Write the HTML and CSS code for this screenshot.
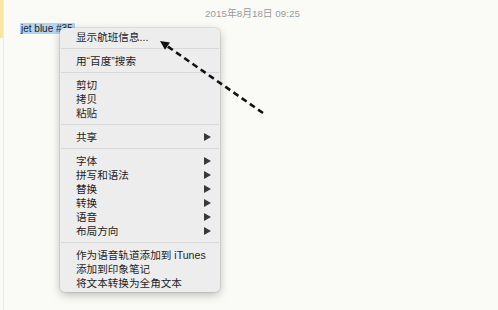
FILE: index.html
```html
<!DOCTYPE html>
<html lang="zh-CN">
<head>
<meta charset="utf-8">
<title>Menu</title>
<link rel="stylesheet" href="styles.css">
</head>
<body>
<div class="page">
  <div class="gutter"><div class="mark"></div></div>
  <div class="rule"></div>
  <div class="content">
    <div class="date">2015年8月18日 09:25</div>
    <div class="text"><span class="sel">jet blue #35</span></div>
  </div>
</div>

<div class="menu">
  <div class="item">显示航班信息...</div>
  <div class="sep"></div>
  <div class="item">用“百度”搜索</div>
  <div class="sep"></div>
  <div class="item">剪切</div>
  <div class="item">拷贝</div>
  <div class="item">粘贴</div>
  <div class="sep"></div>
  <div class="item">共享<span class="sub"></span></div>
  <div class="sep"></div>
  <div class="item">字体<span class="sub"></span></div>
  <div class="item">拼写和语法<span class="sub"></span></div>
  <div class="item">替换<span class="sub"></span></div>
  <div class="item">转换<span class="sub"></span></div>
  <div class="item">语音<span class="sub"></span></div>
  <div class="item">布局方向<span class="sub"></span></div>
  <div class="sep"></div>
  <div class="item">作为语音轨道添加到 iTunes</div>
  <div class="item">添加到印象笔记</div>
  <div class="item">将文本转换为全角文本</div>
</div>

<svg class="arrow" width="498" height="310" viewBox="0 0 498 310">
  <line x1="263" y1="113" x2="167" y2="46" stroke="#111" stroke-width="2.6" stroke-dasharray="6 4"/>
  <polygon points="160,41 170,42.6 165,49.8" fill="#111"/>
</svg>
</body>
</html>
```
FILE: styles.css
```css
html, body {
  margin: 0;
  padding: 0;
}
body {
  width: 498px;
  height: 310px;
  overflow: hidden;
  position: relative;
  background: #fafaf7;
  font-family: "Liberation Sans", "Noto Sans CJK SC", sans-serif;
}
.page {
  display: flex;
  height: 310px;
}
.gutter {
  width: 3px;
  display: flex;
  flex-direction: column;
}
.mark {
  height: 38px;
  background: #f6e6a2;
}
.rule {
  width: 1px;
  background: #ebebe8;
}
.content {
  flex: 1;
  padding-top: 8px;
}
.date {
  text-align: center;
  font-size: 9.8px;
  line-height: 12px;
  color: #9b9b9b;
  padding-left: 3px;
}
.text {
  margin-top: 3px;
  padding-left: 16px;
  font-size: 10px;
  line-height: 11px;
  color: #1c1c1c;
}
.sel {
  display: inline-block;
  background: #b5d4f4;
  padding: 0 2px 0 1px;
  height: 11px;
}
.menu {
  position: absolute;
  left: 60px;
  top: 28px;
  width: 160px;
  padding: 2px 0;
  background: #ededed;
  border-radius: 5px;
  box-shadow: 0 0 0 1px rgba(0, 0, 0, 0.07), 0 3px 10px rgba(0, 0, 0, 0.25);
}
.item {
  display: flex;
  justify-content: space-between;
  align-items: center;
  height: 14px;
  line-height: 14px;
  padding: 0 9px 0 16px;
  font-size: 10.6px;
  color: #1e1e1e;
  white-space: nowrap;
}
.sub {
  width: 0;
  height: 0;
  border-left: 7px solid #3a3a3a;
  border-top: 4px solid transparent;
  border-bottom: 4px solid transparent;
}
.sep {
  height: 1px;
  background: #d8d8d8;
  margin: 4px 1px 5px;
}
.arrow {
  position: absolute;
  left: 0;
  top: 0;
}
```
